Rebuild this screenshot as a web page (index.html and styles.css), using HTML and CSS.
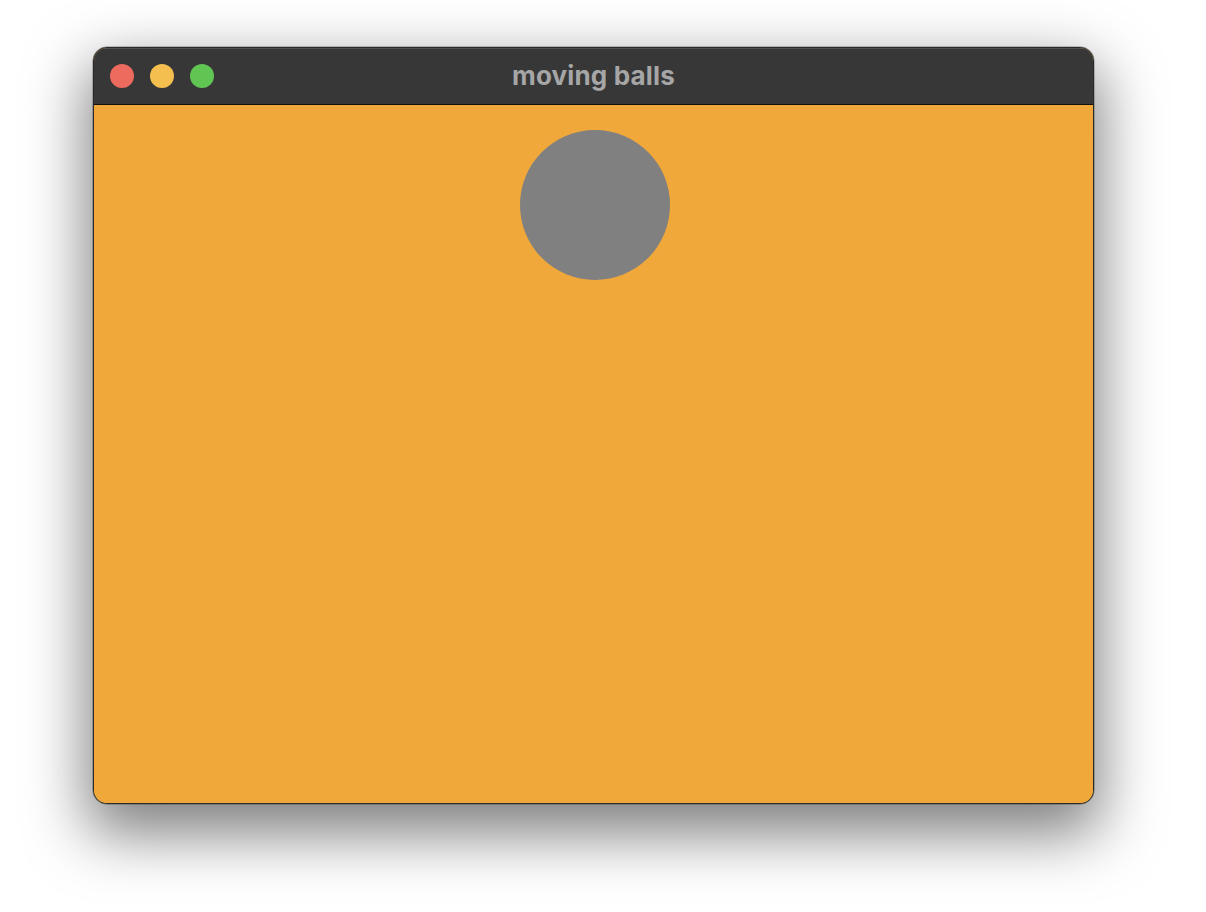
FILE: index.html
```html
<!DOCTYPE html>
<html>
<head>
<meta charset="utf-8">
<link rel="stylesheet" href="styles.css">
</head>
<body>
<div class="window">
  <div class="titlebar">
    <div class="lights">
      <span class="light red"></span>
      <span class="light yellow"></span>
      <span class="light green"></span>
    </div>
    <div class="title">moving balls</div>
  </div>
  <div class="canvas">
    <div class="ball"></div>
  </div>
</div>
</body>
</html>
```
FILE: styles.css
```css
html, body {
  margin: 0;
  padding: 0;
  background: #ffffff;
}
body {
  width: 1206px;
  height: 912px;
  overflow: hidden;
  padding: 47px 0 0 93px;
  box-sizing: border-box;
  font-family: Inter, "Liberation Sans", sans-serif;
}
.window {
  width: 1001px;
  height: 757px;
  box-sizing: border-box;
  border: 1px solid #2a2a2a;
  border-radius: 14px;
  overflow: hidden;
  display: flex;
  flex-direction: column;
  box-shadow: 0 24px 60px 6px rgba(0, 0, 0, 0.5), 0 0 0 0.5px rgba(0,0,0,0.4);
  background: #f0a83b;
}
.titlebar {
  height: 56px;
  flex: none;
  background: #373737;
  border-bottom: 1px solid #111;
  box-shadow: inset 0 1px 0 rgba(255,255,255,0.12);
  position: relative;
  display: flex;
  align-items: center;
  justify-content: center;
}
.lights {
  position: absolute;
  left: 16px;
  top: 16px;
  display: flex;
  gap: 16px;
}
.light {
  width: 24px;
  height: 24px;
  border-radius: 50%;
  display: block;
}
.red { background: #ed6a5e; }
.yellow { background: #f5bf4f; }
.green { background: #61c554; }
.title {
  color: #a6a6a6;
  font-weight: 700;
  font-size: 26px;
  letter-spacing: 0.15px;
  margin-top: -2px;
}
.canvas {
  flex: 1;
  position: relative;
  background: #f0a83b;
}
.ball {
  position: absolute;
  left: 426px;
  top: 25px;
  width: 150px;
  height: 150px;
  border-radius: 50%;
  background: #808080;
}
```
